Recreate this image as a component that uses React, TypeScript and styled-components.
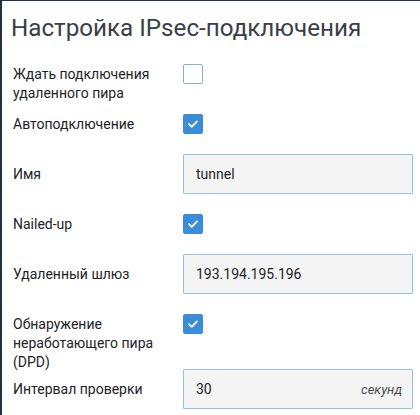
import React from "react";
import styled, { createGlobalStyle } from "styled-components";

const GlobalStyle = createGlobalStyle`
  html, body {
    margin: 0;
    padding: 0;
    background: #ffffff;
  }
  body {
    font-family: Roboto, "Liberation Sans", sans-serif;
  }
`;

const Panel = styled.div`
  width: 420px;
  height: 415px;
  box-sizing: border-box;
  border-top: 1px solid #1f3142;
  border-left: 2px solid #1f3142;
  padding: 0 0 0 9px;
  display: flex;
  flex-direction: column;
  overflow: hidden;
`;

const Title = styled.h1`
  margin: 0;
  padding: 13px 0 0 0;
  height: 53px;
  box-sizing: border-box;
  font-size: 24.2px;
  font-weight: 400;
  line-height: 28px;
  color: #3a3e47;
`;

const Form = styled.div`
  display: flex;
  flex-direction: column;
  gap: 10px;
`;

const Row = styled.div<{ $h: number; $top?: boolean }>`
  display: flex;
  align-items: ${(p) => (p.$top ? "flex-start" : "center")};
  height: ${(p) => p.$h}px;
  padding-top: ${(p) => (p.$top ? 10 : 0)}px;
  box-sizing: border-box;
`;

const Label = styled.div<{ $top?: boolean }>`
  width: 172px;
  box-sizing: border-box;
  padding-left: 2px;
  flex-shrink: 0;
  font-size: 14px;
  line-height: 19px;
  color: #222326;
  padding-top: ${(p) => (p.$top ? 1 : 0)}px;
`;

const Box = styled.span<{ $checked?: boolean }>`
  width: 20px;
  height: 20px;
  box-sizing: border-box;
  border-radius: 2px;
  border: 1px solid ${(p) => (p.$checked ? "#3a8dd6" : "#7fb0cc")};
  background: ${(p) => (p.$checked ? "#3a8dd6" : "#ffffff")};
  display: flex;
  align-items: center;
  justify-content: center;
`;

const Field = styled.div`
  width: 230px;
  height: 40px;
  box-sizing: border-box;
  border: 1px solid #93c3da;
  background: #f4f4f4;
  border-radius: 1px;
  display: flex;
  align-items: center;
  justify-content: space-between;
  padding: 0 10px 0 12px;
  font-size: 14px;
  color: #222326;
`;

const Unit = styled.span`
  font-style: italic;
  font-size: 13px;
  color: #4a4d52;
`;

const Check = ({ checked }: { checked?: boolean }) => (
  <Box $checked={checked}>
    {checked && (
      <svg width="12" height="10" viewBox="0 0 12 10">
        <path d="M2 5.2 L4.8 7.8 L10 2.4" fill="none" stroke="#fff" strokeWidth="1.8" strokeLinecap="round" strokeLinejoin="round" />
      </svg>
    )}
  </Box>
);

export default function App() {
  return (
    <>
      <GlobalStyle />
      <Panel>
        <Title>Настройка IPsec-подключения</Title>
        <Form>
          <Row $h={40} $top>
            <Label $top>Ждать подключения удаленного пира</Label>
            <Check />
          </Row>
          <Row $h={40}>
            <Label>Автоподключение</Label>
            <Check checked />
          </Row>
          <Row $h={40}>
            <Label>Имя</Label>
            <Field>tunnel</Field>
          </Row>
          <Row $h={40}>
            <Label>Nailed-up</Label>
            <Check checked />
          </Row>
          <Row $h={40}>
            <Label>Удаленный шлюз</Label>
            <Field>193.194.195.196</Field>
          </Row>
          <Row $h={55} $top>
            <Label $top>Обнаружение неработающего пира (DPD)</Label>
            <Check checked />
          </Row>
          <Row $h={40}>
            <Label>Интервал проверки</Label>
            <Field>
              30<Unit>секунд</Unit>
            </Field>
          </Row>
        </Form>
      </Panel>
    </>
  );
}
